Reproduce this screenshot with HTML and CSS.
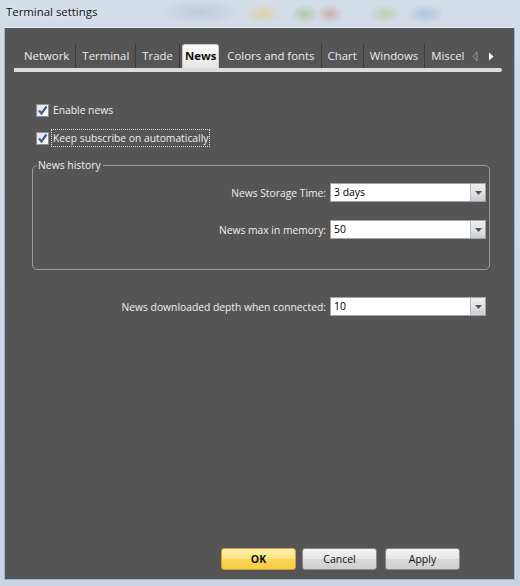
FILE: index.html
```html
<!DOCTYPE html>
<html>
<head>
<meta charset="utf-8">
<link rel="stylesheet" href="styles.css">
</head>
<body>
<div class="window">
  <div class="titlebar"><span class="title">Terminal settings</span></div>
  <div class="client">
    <div class="tabstrip">
      <div class="tab">Network</div>
      <div class="tab">Terminal</div>
      <div class="tab">Trade</div>
      <div class="tab active">News</div>
      <div class="tab">Colors and fonts</div>
      <div class="tab">Chart</div>
      <div class="tab">Windows</div>
      <div class="tab last">Miscel</div>
      <div class="scroll">
        <svg width="6" height="11" viewBox="0 0 6 11" class="arrow-left"><path d="M5 1 L1 5.5 L5 10 Z" fill="none" stroke="#9a9a9a" stroke-width="1"/></svg>
        <svg width="6" height="11" viewBox="0 0 6 11" class="arrow-right"><path d="M1 1.5 L5.5 5.5 L1 9.5 Z" fill="#ffffff"/></svg>
      </div>
    </div>
    <div class="tabbar"></div>

    <div class="content">
      <label class="check first">
        <span class="box"><svg width="11" height="11" viewBox="0 0 11 11"><path d="M2 5.5 L4.5 8.5 L9.5 1.5" fill="none" stroke="#3d5f96" stroke-width="2.2"/></svg></span>
        <span class="check-text">Enable news</span>
      </label>
      <label class="check second">
        <span class="box"><svg width="11" height="11" viewBox="0 0 11 11"><path d="M2 5.5 L4.5 8.5 L9.5 1.5" fill="none" stroke="#3d5f96" stroke-width="2.2"/></svg></span>
        <span class="check-text focused">Keep subscribe on automatically</span>
      </label>

      <fieldset class="group">
        <legend>News history</legend>
        <div class="row">
          <span class="label">News Storage Time:</span>
          <div class="combo"><span class="value">3 days</span><span class="drop"><svg width="7" height="4" viewBox="0 0 7 4"><path d="M0 0 H7 L3.5 4 Z" fill="#555"/></svg></span></div>
        </div>
        <div class="row second-row">
          <span class="label">News max in memory:</span>
          <div class="combo"><span class="value">50</span><span class="drop"><svg width="7" height="4" viewBox="0 0 7 4"><path d="M0 0 H7 L3.5 4 Z" fill="#555"/></svg></span></div>
        </div>
      </fieldset>

      <div class="row outer-row">
        <span class="label">News downloaded depth when connected:</span>
        <div class="combo"><span class="value">10</span><span class="drop"><svg width="7" height="4" viewBox="0 0 7 4"><path d="M0 0 H7 L3.5 4 Z" fill="#555"/></svg></span></div>
      </div>
    </div>

    <div class="buttons">
      <button class="btn ok">OK</button>
      <button class="btn">Cancel</button>
      <button class="btn apply">Apply</button>
    </div>
  </div>
</div>
</body>
</html>
```
FILE: styles.css
```css
* { box-sizing: border-box; }
html, body { margin: 0; padding: 0; }
body {
  width: 520px;
  height: 586px;
  overflow: hidden;
  font-family: "Open Sans", "Noto Sans", sans-serif;
  font-size: 10.3px;
  background: linear-gradient(to bottom, #c3d2e1 0%, #c7d9ec 60%, #bcd3ea 100%);
}
.window {
  width: 520px;
  height: 586px;
  display: flex;
  flex-direction: column;
  background:
    radial-gradient(ellipse 18px 10px at 263px 14px, rgba(230,200,120,0.55), transparent),
    radial-gradient(ellipse 14px 10px at 305px 14px, rgba(140,180,120,0.5), transparent),
    radial-gradient(ellipse 14px 10px at 330px 14px, rgba(200,120,110,0.45), transparent),
    radial-gradient(ellipse 16px 10px at 385px 14px, rgba(170,190,120,0.45), transparent),
    radial-gradient(ellipse 20px 10px at 425px 14px, rgba(150,180,215,0.6), transparent),
    radial-gradient(ellipse 40px 14px at 200px 12px, rgba(170,185,210,0.5), transparent),
    linear-gradient(to bottom, #d3dde8 0%, #c8d4e0 100%);
  background-repeat: no-repeat;
}
.titlebar {
  height: 27px;
  flex: none;
  padding: 4px 0 0 6px;
}
.title {
  font-size: 11.4px;
  color: #111;
  text-shadow: 0 0 6px rgba(255,255,255,0.9);
}
.client {
  flex: 1;
  margin: 0 5px 6px 4px;
  background: #555555;
  border: 1px solid #9fb4c9;
  border-top-color: #e6ecf2;
  display: flex;
  flex-direction: column;
}
.tabstrip {
  display: flex;
  align-items: stretch;
  height: 24px;
  margin-top: 16px;
  padding-left: 13px;
}
.tab {
  color: #ececec;
  font-size: 11.4px;
  line-height: 24px;
  padding: 0 6px;
  border-right: 1px solid #3b3b3b;
  white-space: nowrap;
}
.tab.active {
  background: linear-gradient(to bottom, #fafafa 0%, #eeeeee 60%, #e4e4e4 100%);
  color: #111;
  font-weight: bold;
  border: 1px solid #c8c8c8;
  border-bottom: none;
  border-radius: 3px 3px 0 0;
  margin: 0 2px;
  padding: 0 2px;
  line-height: 22px;
}
.tab.last { border-right: none; padding-right: 7px; }
.scroll {
  display: flex;
  align-items: center;
  gap: 10px;
}
.tabbar {
  height: 4px;
  margin: 0 12px 0 9px;
  background: #dcdcdc;
  border-radius: 0 3px 3px 0;
}
.content {
  padding: 0 24px 0 27px;
  color: #f0f0f0;
}
.check {
  display: flex;
  align-items: center;
  height: 16px;
  margin-left: 4px;
}
.check.first { margin-top: 30px; }
.check.second { margin-top: 12px; }
.box {
  width: 13px;
  height: 13px;
  border: 1px solid #8e8f8f;
  background: linear-gradient(135deg, #e0e0e0 0%, #ffffff 100%);
  display: flex;
  align-items: center;
  justify-content: center;
  margin-right: 3px;
}
.check-text {
  font-size: 10.3px;
  color: #efefef;
  padding: 1px 1px;
  line-height: 14px;
}
.check-text.focused { outline: 1px dotted #e0e0e0; }

.group {
  margin: 12px 0 0 0;
  border: 1px solid #9c9c9c;
  border-radius: 5px;
  padding: 11px 3px 0 0;
  height: 112px;
}
.group legend {
  font-size: 10.4px;
  color: #efefef;
  padding: 0 2px 0 1px;
  margin-left: 4px;
  line-height: 14px;
}
.row {
  display: flex;
  justify-content: flex-end;
  align-items: center;
  height: 19px;
}
.row.second-row { margin-top: 18px; }
.row.outer-row { margin-top: 27px; margin-right: 4px; }
.label {
  font-size: 10.3px;
  color: #efefef;
  margin-right: 4px;
}
.combo {
  width: 156px;
  height: 19px;
  background: #ffffff;
  border: 1px solid #a4a4a4;
  display: flex;
  align-items: stretch;
}
.combo .value {
  flex: 1;
  color: #000;
  font-size: 10.4px;
  line-height: 17px;
  padding-left: 3px;
}
.drop {
  width: 15px;
  background: linear-gradient(to bottom, #eef0f2 0%, #dfe2e6 50%, #c9ced4 100%);
  border-left: 1px solid #b8bcc2;
  display: flex;
  align-items: center;
  justify-content: center;
}
.buttons {
  margin-top: auto;
  display: flex;
  justify-content: flex-end;
  gap: 6px;
  padding: 0 54px 9px 0;
}
.btn {
  width: 75px;
  height: 22px;
  font-family: "Open Sans", "Noto Sans", sans-serif;
  font-size: 10.5px;
  color: #111;
  border: 1px solid #8a8a8a;
  border-radius: 3px;
  background: linear-gradient(to bottom, #f4f4f4 0%, #e6e6e6 48%, #d8d8d8 52%, #cfcfcf 100%);
  padding: 0;
}
.btn.apply { margin-left: 2px; }
.btn.ok {
  font-weight: bold;
  border-color: #c9a43a;
  background: linear-gradient(to bottom, #fff1b0 0%, #fde27c 48%, #fbd557 52%, #f8cc45 100%);
}
```
